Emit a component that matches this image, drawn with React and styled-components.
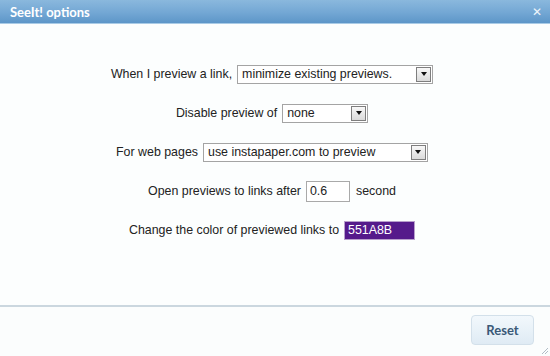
import React from "react";
import styled, { createGlobalStyle } from "styled-components";

const GlobalStyle = createGlobalStyle`
  html, body {
    margin: 0;
    padding: 0;
    background: #fcfefe;
  }
`;

const Dialog = styled.div`
  width: 550px;
  height: 356px;
  display: flex;
  flex-direction: column;
  background: #fcfefe;
  overflow: hidden;
`;

const TitleBar = styled.div`
  height: 23px;
  flex: none;
  display: flex;
  align-items: center;
  justify-content: space-between;
  padding: 0 8px 0 10px;
  background: linear-gradient(#8ab8dd, #73a7d4 55%, #5d96c8);
  border-bottom: 1px solid #a9cbe6;
`;

const Title = styled.span`
  font-family: Lato, "Open Sans", sans-serif;
  font-weight: 700;
  font-size: 13px;
  color: #fff;
`;

const Close = styled.span`
  font-family: "DejaVu Sans", sans-serif;
  font-weight: 700;
  font-size: 12px;
  color: #eef5fb;
`;

const Body = styled.div`
  flex: 1;
  display: flex;
  flex-direction: column;
  align-items: center;
  gap: 19px;
  padding-top: 40px;
  padding-right: 6px;
`;

const Row = styled.div`
  display: flex;
  align-items: center;
  height: 20px;
  font-family: "Liberation Sans", Arial, sans-serif;
  font-size: 12.4px;
  color: #222;
`;

const Label = styled.span`
  margin-right: 5px;
`;

const After = styled.span`
  margin-left: 6px;
`;

const Select = styled.div`
  width: ${(p) => p.$w}px;
  height: 19px;
  box-sizing: border-box;
  display: flex;
  align-items: center;
  justify-content: space-between;
  border: 1px solid #a4a4a4;
  background: #fff;
  padding: 0 1px 0 4px;
`;

const Arrow = styled.span`
  width: 15px;
  height: 15px;
  box-sizing: border-box;
  border: 1px solid #7e7e7e;
  background: linear-gradient(#f8f8f8, #dadada);
  display: flex;
  align-items: center;
  justify-content: center;
  &::after {
    content: "";
    border-left: 3px solid transparent;
    border-right: 3px solid transparent;
    border-top: 4px solid #111;
  }
`;

const Input = styled.div`
  width: ${(p) => p.$w}px;
  height: ${(p) => p.$h}px;
  box-sizing: border-box;
  display: flex;
  align-items: center;
  padding-left: 3px;
  border: 1px solid ${(p) => (p.$bg ? "#b8a0cc" : "#a9a9a9")};
  background: ${(p) => p.$bg || "#fff"};
  color: ${(p) => (p.$bg ? "#fff" : "#222")};
`;

const Footer = styled.div`
  height: 51px;
  box-sizing: border-box;
  flex: none;
  border-top: 2px solid #cbd7df;
  background: #fbfdfd;
  display: flex;
  justify-content: flex-end;
  align-items: flex-start;
  padding: 8px 16px 0 0;
  position: relative;
`;

const ResetButton = styled.button`
  width: 63px;
  height: 30px;
  border: 1px solid #d3e0ea;
  border-radius: 4px;
  background: linear-gradient(#f2f8fc, #dfebf4);
  font-family: Lato, "Open Sans", sans-serif;
  font-weight: 700;
  font-size: 13px;
  color: #3a5977;
  padding: 0;
`;

const Grip = styled.svg`
  position: absolute;
  right: 1px;
  bottom: 1px;
`;

function Dropdown({ w, children }) {
  return (
    <Select $w={w}>
      <span>{children}</span>
      <Arrow />
    </Select>
  );
}

export default function App() {
  return (
    <>
      <GlobalStyle />
      <Dialog>
        <TitleBar>
          <Title>SeeIt! options</Title>
          <Close>✕</Close>
        </TitleBar>
        <Body>
          <Row>
            <Label>When I preview a link,</Label>
            <Dropdown w={196}>minimize existing previews.</Dropdown>
          </Row>
          <Row>
            <Label>Disable preview of</Label>
            <Dropdown w={86}>none</Dropdown>
          </Row>
          <Row>
            <Label>For web pages</Label>
            <Dropdown w={225}>use instapaper.com to preview</Dropdown>
          </Row>
          <Row>
            <Label>Open previews to links after</Label>
            <Input $w={44} $h={21}>0.6</Input>
            <After>second</After>
          </Row>
          <Row>
            <Label>Change the color of previewed links to</Label>
            <Input $w={71} $h={19} $bg="#551a8b">551A8B</Input>
          </Row>
        </Body>
        <Footer>
          <ResetButton>Reset</ResetButton>
          <Grip width="8" height="8" viewBox="0 0 8 8">
            <path d="M7 1 L1 7 M7 4 L4 7" stroke="#b0bcc6" strokeWidth="1" />
          </Grip>
        </Footer>
      </Dialog>
    </>
  );
}
